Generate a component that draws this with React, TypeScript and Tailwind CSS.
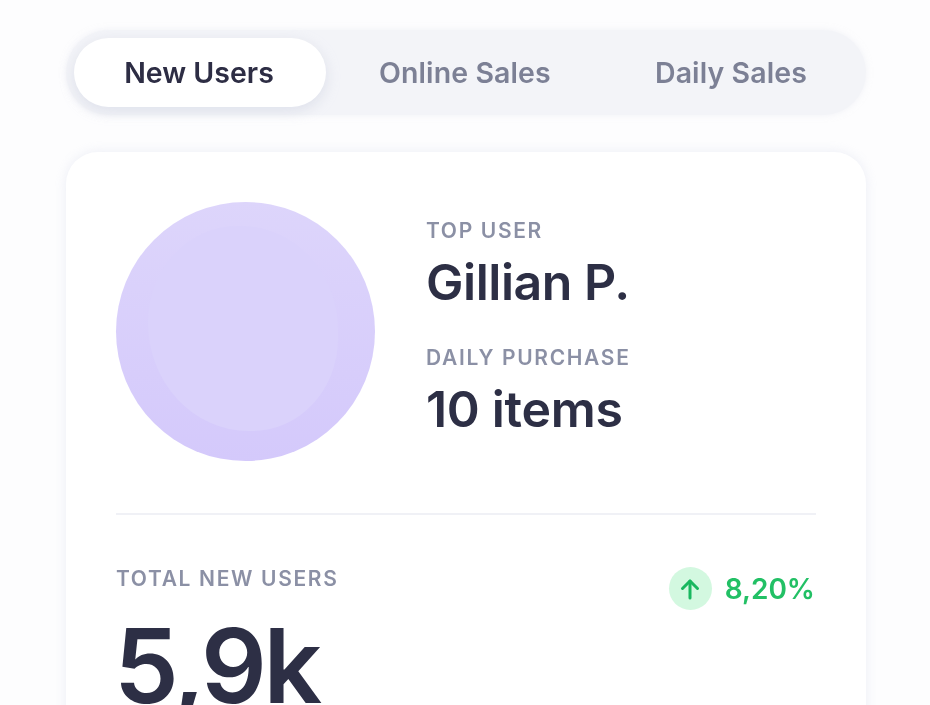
const font = { fontFamily: "Inter, 'Noto Sans', sans-serif" };

function Tabs() {
  return (
    <div className="flex h-[85px] w-[800px] shrink-0 items-center rounded-full bg-[#f3f4f8] pl-2 pr-[59px] shadow-[0_0_6px_rgba(230,232,240,0.5)]">
      <div className="flex h-[69px] w-[252px] items-center justify-center rounded-full bg-white pr-[2px] pt-[2px] text-[28.5px] font-semibold text-[#2d2d44] shadow-[0_4px_14px_rgba(190,195,215,0.4)]">
        New Users
      </div>
      <div className="ml-[53px] pt-[2px] text-[28.5px] font-semibold tracking-[0.1px] text-[#7c8095]">Online Sales</div>
      <div className="ml-auto pt-[2px] text-[28.5px] font-semibold tracking-[0.1px] text-[#7c8095]">Daily Sales</div>
    </div>
  );
}

function Label({ children }: { children: React.ReactNode }) {
  return <div className="text-[21px] leading-6 font-semibold tracking-[1.65px] text-[#8b90a5]">{children}</div>;
}

export default function App() {
  return (
    <div style={font} className="flex h-[705px] w-[930px] flex-col items-center overflow-hidden bg-[#fdfdfe] pt-[30px] pl-[2px] blur-[0.5px]">
      <Tabs />
      <div className="mt-[37px] flex h-[600px] w-[800px] shrink-0 flex-col rounded-t-[32px] bg-white px-[50px] pt-[50px] shadow-[0_0_12px_rgba(225,228,240,0.6)]">
        <div className="flex items-start">
          <div className="h-[259px] w-[259px] shrink-0 rounded-full bg-gradient-to-b from-[#ddd5fb] to-[#d4c9fb] p-[24px]">
            <div className="h-[205px] w-[190px] translate-x-[8px] rounded-[48%_52%_46%_54%] bg-[#dad2fb]" />
          </div>
          <div className="ml-[51px] pt-[17px]">
            <Label>TOP USER</Label>
            <div className="mt-[9px] text-[50px] leading-[60px] font-semibold tracking-[-0.45px] text-[#2d2f45]">Gillian P.</div>
            <div className="mt-[34px]">
              <Label>DAILY PURCHASE</Label>
            </div>
            <div className="mt-[9px] text-[50px] leading-[60px] font-semibold tracking-[-0.3px] text-[#2d2f45]">10 items</div>
          </div>
        </div>
        <div className="mt-[52px] h-[2px] w-full bg-[#f0f1f6]" />
        <div className="mt-[52px] flex items-start justify-between">
          <div>
            <Label>TOTAL NEW USERS</Label>
            <div className="mt-[15px] -ml-[2px] text-[103px] leading-[120px] font-semibold tracking-[-3.5px] text-[#2d2f45]">5,9k</div>
          </div>
          <div className="flex items-center pr-[1px]">
            <div className="flex h-[43px] w-[43px] items-center justify-center rounded-full bg-[#d3f8e0]">
              <svg width="26" height="26" viewBox="0 0 26 26" fill="none" stroke="#19b75f" strokeWidth="3" strokeLinecap="round" strokeLinejoin="round">
                <path d="M13 22V5" />
                <path d="M5.5 12.5 13 5l7.5 7.5" />
              </svg>
            </div>
            <div className="ml-[13px] text-[28px] font-semibold text-[#22c065]">8,20%</div>
          </div>
        </div>
      </div>
    </div>
  );
}
